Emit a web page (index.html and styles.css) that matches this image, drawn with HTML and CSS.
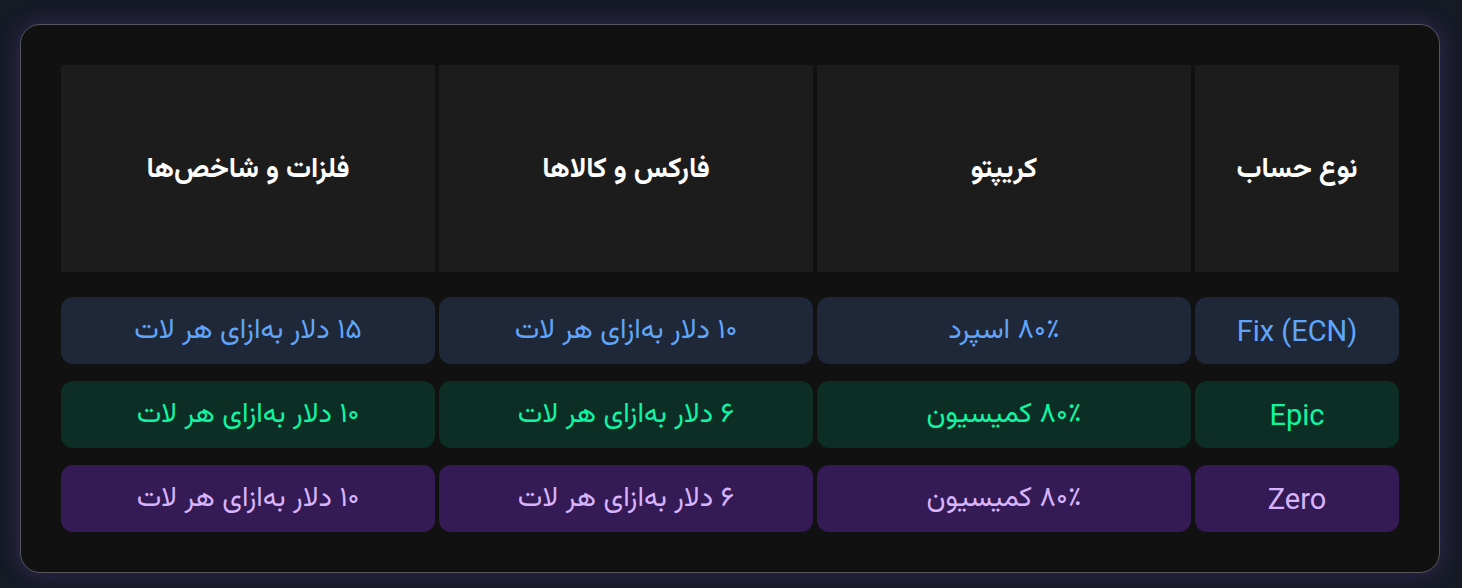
FILE: index.html
```html
<!DOCTYPE html>
<html lang="fa" dir="rtl">
<head>
<meta charset="utf-8">
<title>مقایسه حساب‌ها</title>
<link rel="stylesheet" href="styles.css">
</head>
<body>
<div class="card">
  <div class="grid">
    <div class="head">نوع حساب</div>
    <div class="head">کریپتو</div>
    <div class="head">فارکس و کالاها</div>
    <div class="head">فلزات و شاخص‌ها</div>

    <div class="cell blue latin">Fix (ECN)</div>
    <div class="cell blue">۸۰٪ اسپرد</div>
    <div class="cell blue">۱۰ دلار به‌ازای هر لات</div>
    <div class="cell blue">۱۵ دلار به‌ازای هر لات</div>

    <div class="cell green latin">Epic</div>
    <div class="cell green">۸۰٪ کمیسیون</div>
    <div class="cell green">۶ دلار به‌ازای هر لات</div>
    <div class="cell green">۱۰ دلار به‌ازای هر لات</div>

    <div class="cell purple latin">Zero</div>
    <div class="cell purple">۸۰٪ کمیسیون</div>
    <div class="cell purple">۶ دلار به‌ازای هر لات</div>
    <div class="cell purple">۱۰ دلار به‌ازای هر لات</div>
  </div>
</div>
</body>
</html>
```

FILE: styles.css
```css
html, body {
  margin: 0;
  padding: 0;
  background: #161a25;
}
body {
  padding: 24px 22px 14px 20px;
  font-family: Vazirmatn, "Noto Sans Arabic", "DejaVu Sans", Roboto, sans-serif;
}
.card {
  background: #111111;
  border: 1.5px solid #55555a;
  border-radius: 20px;
  padding: 40px;
  box-shadow: 0 0 22px rgba(120, 80, 210, 0.3);
}
.grid {
  display: grid;
  grid-template-columns: 204px 1fr 1fr 1fr;
  grid-template-rows: 215px 67px 67px 67px;
  column-gap: 4px;
  row-gap: 17px;
}
.head {
  background: #1c1c1c;
  color: #ffffff;
  font-weight: 700;
  font-size: 28px;
  display: flex;
  align-items: center;
  justify-content: center;
  margin-bottom: 8px;
  padding-top: 2px;
}
.cell {
  border-radius: 12px;
  display: flex;
  align-items: center;
  justify-content: center;
  font-size: 28px;
  padding-top: 1px;
}
.latin {
  font-family: Roboto, "Liberation Sans", sans-serif;
  font-size: 29px;
  padding-top: 0;
}
.blue { background: #1f2838; color: #60a5fa; }
.green { background: #0c2e25; color: #0ff5a3; }
.purple { background: #341b55; color: #d8b4fe; }
```
